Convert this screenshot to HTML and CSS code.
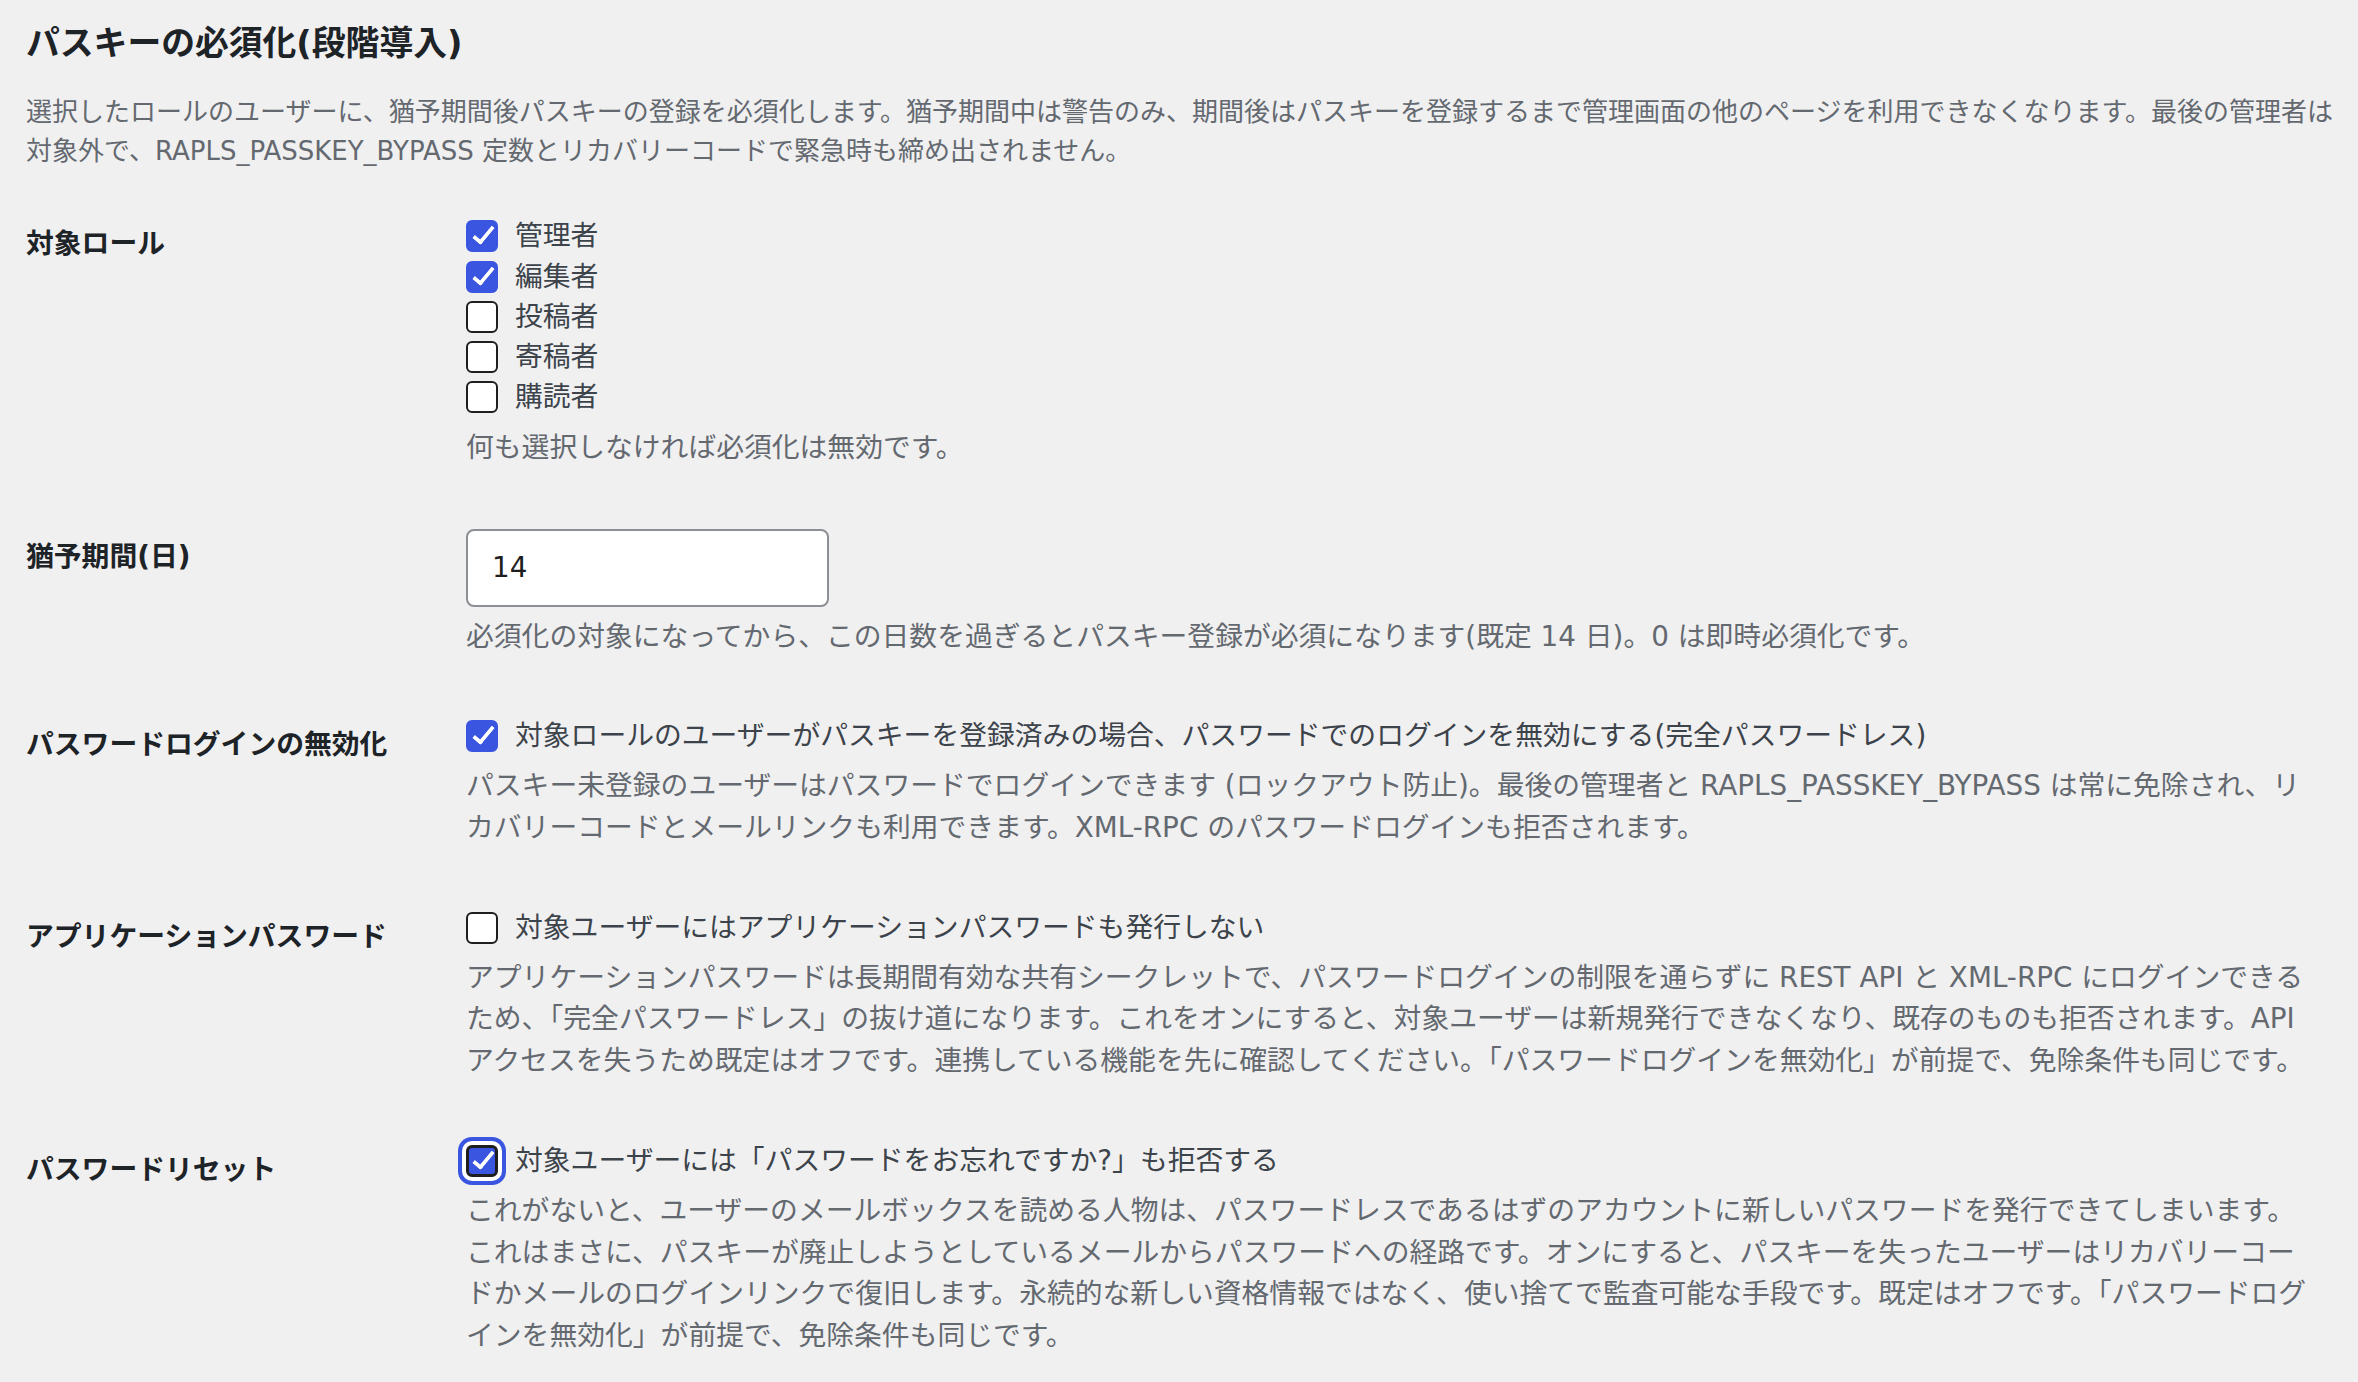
FILE: index.html
```html
<!DOCTYPE html>
<html lang="ja">
<head>
<meta charset="utf-8">
<title>パスキーの必須化(段階導入)</title>
<link rel="stylesheet" href="styles.css">
</head>
<body>
<div class="wrap">
  <h2 class="section-title">パスキーの必須化(段階導入)</h2>
  <p class="section-desc">選択したロールのユーザーに、猶予期間後パスキーの登録を必須化します。猶予期間中は警告のみ、期間後はパスキーを登録するまで管理画面の他のページを利用できなくなります。最後の管理者は対象外で、RAPLS_PASSKEY_BYPASS 定数とリカバリーコードで緊急時も締め出されません。</p>

  <table class="form-table">
    <tr>
      <th scope="row">対象ロール</th>
      <td>
        <fieldset class="role-list">
          <label class="check"><input type="checkbox" checked><span>管理者</span></label>
          <label class="check"><input type="checkbox" checked><span>編集者</span></label>
          <label class="check"><input type="checkbox"><span>投稿者</span></label>
          <label class="check"><input type="checkbox"><span>寄稿者</span></label>
          <label class="check"><input type="checkbox"><span>購読者</span></label>
        </fieldset>
        <p class="description">何も選択しなければ必須化は無効です。</p>
      </td>
    </tr>
    <tr>
      <th scope="row"><label for="grace-days">猶予期間(日)</label></th>
      <td>
        <input id="grace-days" class="days-input" type="number" value="14">
        <p class="description">必須化の対象になってから、この日数を過ぎるとパスキー登録が必須になります(既定 14 日)。0 は即時必須化です。</p>
      </td>
    </tr>
    <tr>
      <th scope="row">パスワードログインの無効化</th>
      <td>
        <label class="check"><input type="checkbox" checked><span>対象ロールのユーザーがパスキーを登録済みの場合、パスワードでのログインを無効にする(完全パスワードレス)</span></label>
        <p class="description">パスキー未登録のユーザーはパスワードでログインできます (ロックアウト防止)。最後の管理者と RAPLS_PASSKEY_BYPASS は常に免除され、リカバリーコードとメールリンクも利用できます。XML-RPC のパスワードログインも拒否されます。</p>
      </td>
    </tr>
    <tr>
      <th scope="row">アプリケーションパスワード</th>
      <td>
        <label class="check"><input type="checkbox"><span>対象ユーザーにはアプリケーションパスワードも発行しない</span></label>
        <p class="description">アプリケーションパスワードは長期間有効な共有シークレットで、パスワードログインの制限を通らずに REST API と XML-RPC にログインできるため、「完全パスワードレス」の抜け道になります。これをオンにすると、対象ユーザーは新規発行できなくなり、既存のものも拒否されます。API アクセスを失うため既定はオフです。連携している機能を先に確認してください。「パスワードログインを無効化」が前提で、免除条件も同じです。</p>
      </td>
    </tr>
    <tr>
      <th scope="row">パスワードリセット</th>
      <td>
        <label class="check"><input class="is-focused" type="checkbox" checked><span>対象ユーザーには「パスワードをお忘れですか?」も拒否する</span></label>
        <p class="description">これがないと、ユーザーのメールボックスを読める人物は、パスワードレスであるはずのアカウントに新しいパスワードを発行できてしまいます。これはまさに、パスキーが廃止しようとしているメールからパスワードへの経路です。オンにすると、パスキーを失ったユーザーはリカバリーコードかメールのログインリンクで復旧します。永続的な新しい資格情報ではなく、使い捨てで監査可能な手段です。既定はオフです。「パスワードログインを無効化」が前提で、免除条件も同じです。</p>
      </td>
    </tr>
  </table>
</div>
</body>
</html>
```

FILE: styles.css
```css
*,
*::before,
*::after {
  box-sizing: border-box;
}

html,
body {
  margin: 0;
  background: #f0f0f1;
}

body {
  color: #3c434a;
  font-family: "DejaVu Sans", "Noto Sans CJK JP", sans-serif;
  overflow: hidden;
}

.wrap {
  padding: 0 18px 0 26px;
}

.section-title {
  margin: 22px 0 0;
  font-size: 33.8px;
  line-height: 44px;
  font-weight: 600;
  color: #1d2327;
}

.section-desc {
  margin: 27px 0 0;
  font-size: 26px;
  line-height: 39.2px;
  color: #646970;
}

.form-table {
  width: 100%;
  margin-top: 15px;
  border-collapse: collapse;
  border-spacing: 0;
}

.form-table th {
  width: 400px;
  padding: 40px 20px 30px 0;
  box-sizing: content-box;
  text-align: left;
  vertical-align: top;
  font-size: 27.8px;
  line-height: 36.1px;
  font-weight: 600;
  color: #1d2327;
}

.form-table td {
  padding: 30px 20px;
  vertical-align: top;
  font-size: 27.8px;
  line-height: 36.1px;
  color: #3c434a;
}

.role-list {
  display: flex;
  flex-direction: column;
  margin: 0;
  padding: 0;
  border: 0;
  min-width: 0;
}

.check {
  display: flex;
  align-items: center;
  gap: 17px;
  height: 38px;
}

.role-list .check {
  height: 40.1px;
}

.check input[type="checkbox"] {
  -webkit-appearance: none;
  appearance: none;
  position: relative;
  flex: none;
  width: 32px;
  height: 32px;
  margin: 0;
  border: 2px solid #1e1e1e;
  border-radius: 6px;
  background: #fff;
}

.check input[type="checkbox"]:checked {
  background: #3a55e0;
  border-color: #3a55e0;
}

.check input[type="checkbox"]:checked::before {
  content: "";
  position: absolute;
  left: 9.5px;
  top: 0;
  width: 11px;
  height: 22px;
  border: solid #fff;
  border-width: 0 4.5px 4.5px 0;
  border-radius: 0 0 2px 0;
  transform: rotate(40deg);
}

.check input[type="checkbox"].is-focused {
  border: 3px solid #1e1e1e;
  box-shadow: 0 0 0 4px #fff, 0 0 0 8px #3a55e0;
}

.check input[type="checkbox"].is-focused::before {
  left: 8.5px;
  top: -1px;
}

.description {
  margin: 10px 0 0;
  font-size: 27.8px;
  line-height: 41.7px;
  color: #646970;
}

.days-input + .description {
  margin-top: 9px;
}

.days-input {
  display: block;
  width: 363px;
  height: 78px;
  margin: 0;
  padding: 0 24px;
  border: 2px solid #8c8f94;
  border-radius: 8px;
  background: #fff;
  color: #1e1e1e;
  font-family: "DejaVu Sans", "Noto Sans CJK JP", sans-serif;
  font-size: 27.8px;
  -moz-appearance: textfield;
}

.days-input::-webkit-outer-spin-button,
.days-input::-webkit-inner-spin-button {
  -webkit-appearance: none;
  margin: 0;
}
```
